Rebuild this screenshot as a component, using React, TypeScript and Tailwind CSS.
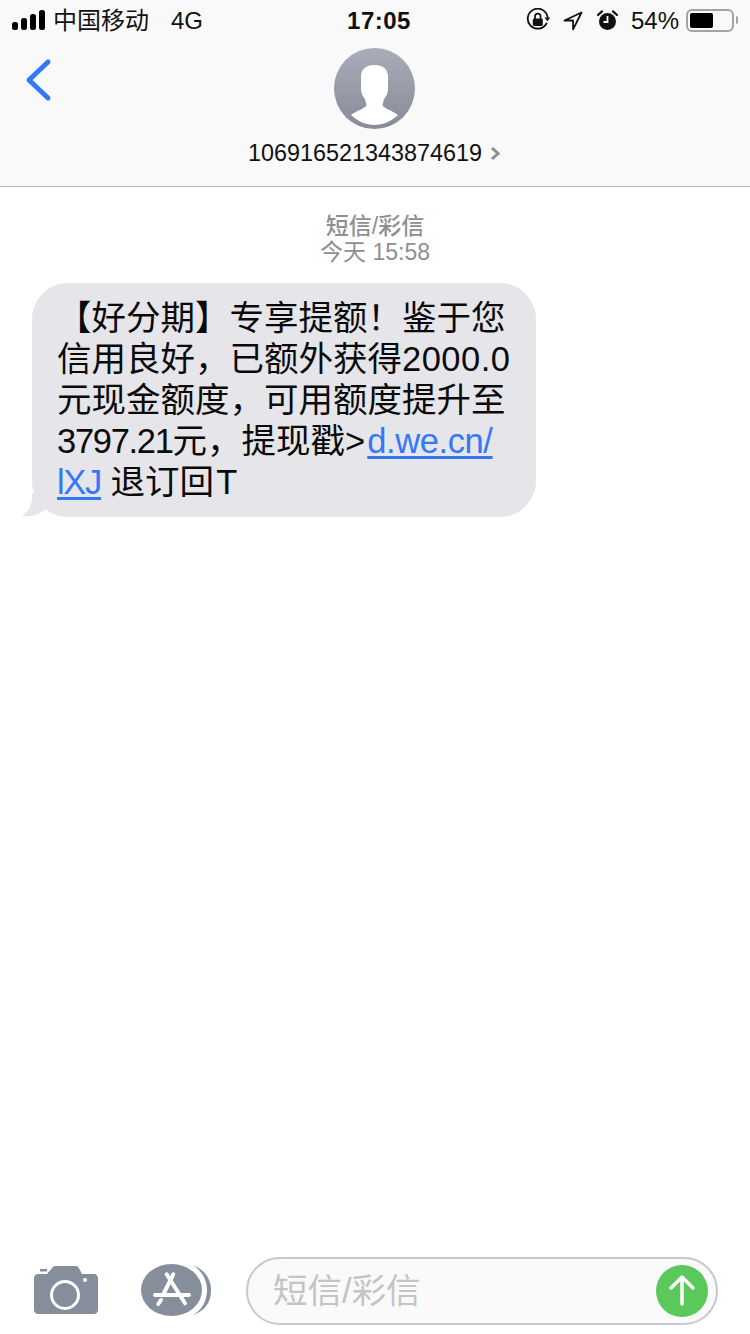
function SignalBars() {
  return (
    <svg width="34" height="20" viewBox="0 0 34 20" className="text-black">
      <rect x="0" y="12" width="6" height="8" rx="2.5" fill="currentColor" />
      <rect x="9" y="8" width="6" height="12" rx="2.5" fill="currentColor" />
      <rect x="18" y="4" width="6" height="16" rx="2.5" fill="currentColor" />
      <rect x="27" y="0" width="6" height="20" rx="2.5" fill="currentColor" />
    </svg>
  );
}

function RotationLock() {
  return (
    <svg width="24" height="24" viewBox="0 0 24 24" fill="none">
      <path d="M20.5 15.5A10 10 0 1 1 21.6 9" stroke="#111" strokeWidth="1.8" strokeLinecap="round" />
      <path d="M18.4 9.6h6l-3 3.6z" fill="#111" />
      <rect x="6.8" y="10.5" width="10" height="7.5" rx="1.4" fill="#111" />
      <path d="M9 11V8.5a2.8 2.8 0 0 1 5.6 0V11" stroke="#111" strokeWidth="1.7" />
    </svg>
  );
}

function LocationArrow() {
  return (
    <svg width="20" height="20" viewBox="0 0 20 20" fill="none">
      <path d="M18.5 1.5 1.5 9.5h8.6v8.8z" stroke="#111" strokeWidth="1.8" strokeLinejoin="round" />
    </svg>
  );
}

function AlarmClock() {
  return (
    <svg width="21" height="21" viewBox="0 0 21 21" fill="none">
      <circle cx="10.5" cy="11.5" r="8.5" fill="#111" />
      <path d="M10.5 6v6H6.5" stroke="#f9f9f9" strokeWidth="1.8" />
      <path d="M1 5 5 1.4M20 5 16 1.4" stroke="#111" strokeWidth="2.2" strokeLinecap="round" />
    </svg>
  );
}

function Battery() {
  return (
    <div className="flex items-center">
      <div className="flex h-[23px] w-[48px] items-center rounded-[6px] border-2 border-[#a3a3a3] px-[2px]">
        <div className="h-[15px] w-[23px] rounded-[2px] bg-black" />
      </div>
      <div className="ml-[2px] h-[8px] w-[2px] rounded-r-full bg-[#a3a3a3]" />
    </div>
  );
}

function StatusBar() {
  return (
    <div className="grid h-[40px] grid-cols-[1fr_auto_1fr] items-center pr-[12px] pl-[12px] text-[24px] leading-none text-[#111]">
      <div className="flex items-center">
        <SignalBars />
        <span className="ml-[7px] pt-[1px]">中国移动</span>
        <span className="ml-[22px] pt-[1px]">4G</span>
      </div>
      <div className="ml-[8px] pt-[1px] text-[24px] font-semibold tracking-[0.5px]">17:05</div>
      <div className="flex items-center justify-end">
        <RotationLock />
        <div className="mt-[2px] ml-[13px]">
          <LocationArrow />
        </div>
        <div className="ml-[14px]">
          <AlarmClock />
        </div>
        <span className="ml-[13px] pt-[1px]">54%</span>
        <div className="ml-[7px]">
          <Battery />
        </div>
      </div>
    </div>
  );
}

function Avatar() {
  return (
    <svg width="81" height="81" viewBox="0 0 81 81">
      <defs>
        <linearGradient id="avatarFill" x1="0" y1="0" x2="0" y2="1">
          <stop offset="0" stopColor="#a9adb9" />
          <stop offset="1" stopColor="#878b98" />
        </linearGradient>
      </defs>
      <circle cx="40.5" cy="40.5" r="40.5" fill="url(#avatarFill)" />
      <path
        d="M40.500 17C32 17 27 21 27 29L27 42C27.500 46 29 49 31 51L32.500 57C32 60 22 63 17 67C24 73.500 32 77 40.500 77C49 77 57 73.500 64 67C59 63 49 60 48.500 57L50 51C52 49 53.500 46 54 42L54 29C54 21 49 17 40.500 17z"
        fill="#fff"
      />
    </svg>
  );
}

function Header() {
  return (
    <header className="border-b border-[#b2b2b2] bg-[#f9f9f9]">
      <StatusBar />
      <div className="grid h-[146px] grid-cols-[1fr_auto_1fr]">
        <div className="pt-[17px] pl-[24px]">
          <svg width="30" height="46" viewBox="0 0 30 46" fill="none">
            <path d="M24 5 5 23l19 18" stroke="#3478f6" strokeWidth="5" strokeLinecap="round" strokeLinejoin="round" />
          </svg>
        </div>
        <div className="flex flex-col items-center pt-[8px]">
          <Avatar />
          <div className="mt-[10px] mr-[2px] flex items-center text-[23.4px] leading-[28px] text-[#111]">
            <span>106916521343874619</span>
            <svg className="ml-[8px]" width="10" height="15" viewBox="0 0 10 15" fill="none">
              <path d="M2 2l6 5.500-6 5.500" stroke="#8e8e93" strokeWidth="3" />
            </svg>
          </div>
        </div>
        <div />
      </div>
    </header>
  );
}

function MessageBubble() {
  return (
    <div className="relative ml-[32px] w-[504px] rounded-[36px] bg-[#e5e5ea] px-[25px] pt-[15px] pb-[14px] text-[34.5px] leading-[41px] text-[#0a0a0a]">
      <svg className="absolute bottom-0 left-[-12px]" width="40" height="24" viewBox="0 0 40 24">
        <path d="M12 0C13 11 9 18 2 23C10 24 18 22 25 17L40 0z" fill="#e5e5ea" />
      </svg>
      <div className="relative whitespace-nowrap">
        <div>【好分期】专享提额！鉴于您</div>
        <div>
          信用良好，已额外获得<span className="tracking-[0.5px]">2000.0</span>
        </div>
        <div>元现金额度，可用额度提升至</div>
        <div>
          <span className="tracking-[-1.3px]">3797.21</span>元，提现戳&gt;
          <a className="ml-[2px] tracking-[-0.4px] text-[#3478f6] underline underline-offset-[3px]">d.we.cn/</a>
        </div>
        <div>
          <a className="tracking-[-1.3px] text-[#3478f6] underline underline-offset-[3px]">lXJ</a> 退订回<span className="ml-[2px]">T</span>
        </div>
      </div>
    </div>
  );
}

function CameraIcon() {
  return (
    <svg width="64" height="48" viewBox="0 0 64 48">
      <path
        fill="#868e9c"
        d="M4 8h9l5.500-6.500C19.500.500 20 0 21.500 0h20c1.500 0 2 .5 3 1.500L48 8h12c2.200 0 4 1.800 4 4v32c0 2.200-1.800 4-4 4H4c-2.200 0-4-1.800-4-4V12c0-2.200 1.800-4 4-4z"
      />
      <rect x="6" y="3" width="7" height="2.500" fill="#868e9c" />
      <circle cx="31" cy="29" r="13.500" fill="none" stroke="#fff" strokeWidth="3" />
      <circle cx="51" cy="14" r="2" fill="#fff" />
    </svg>
  );
}

function AppStoreIcon() {
  return (
    <svg width="71" height="52" viewBox="0 0 71 52" fill="none">
      <path d="M52 1C64 6 70 15 70 26C70 38 64 47 52 51C61 46 66 37 66 26C66 16 61 7 52 1z" fill="#868e9c" />
      <ellipse cx="30.500" cy="26" rx="30.500" ry="26" fill="#868e9c" />
      <g stroke="#fff" strokeWidth="4" strokeLinecap="round">
        <path d="M32.300 10.300 23 29" />
        <path d="M25.700 10.300 44 39.300" />
        <path d="M14 31h34" />
        <path d="M20 36l-2.700 4" />
      </g>
    </svg>
  );
}

function Composer() {
  return (
    <footer className="flex items-center pr-[32px] pb-[9px] pl-[34px]">
      <div className="mb-[2px]">
        <CameraIcon />
      </div>
      <div className="mb-[2px] ml-[43px]">
        <AppStoreIcon />
      </div>
      <div className="ml-[34px] flex h-[68px] flex-1 items-center rounded-full border-2 border-[#c8c8cc] bg-[#fafafa] pr-[8px] pl-[25px]">
        <span className="flex-1 text-[34.5px] leading-none text-[#c4c4c6]">短信/彩信</span>
        <div className="flex h-[52px] w-[52px] items-center justify-center rounded-full bg-[#5ac85a]">
          <svg width="30" height="34" viewBox="0 0 30 34" fill="none">
            <path d="M15 30V4M4 14 15 3l11 11" stroke="#fff" strokeWidth="3.5" strokeLinecap="round" strokeLinejoin="round" />
          </svg>
        </div>
      </div>
    </footer>
  );
}

export default function App() {
  return (
    <div className="flex h-[1334px] w-[750px] flex-col overflow-hidden bg-white [font-family:'Liberation_Sans','Noto_Sans_CJK_SC',sans-serif]">
      <Header />
      <main className="flex-1">
        <div className="mt-[26px] text-center text-[23px] leading-[26px] text-[#8e8e93]">
          <div className="font-medium">短信/彩信</div>
          <div>今天 15:58</div>
        </div>
        <div className="mt-[18px]">
          <MessageBubble />
        </div>
      </main>
      <Composer />
    </div>
  );
}
